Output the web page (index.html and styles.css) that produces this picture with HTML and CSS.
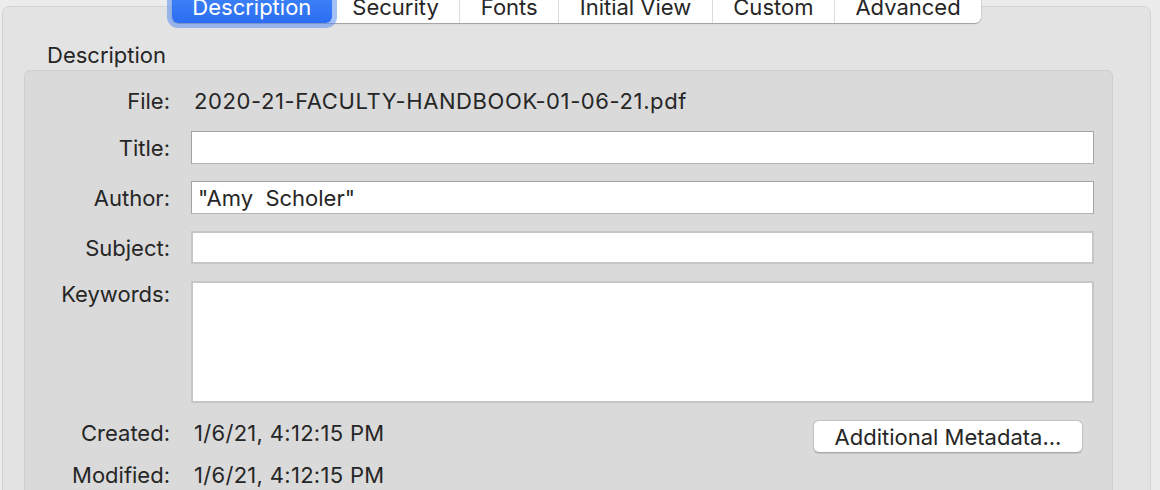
FILE: index.html
```html
<!DOCTYPE html>
<html lang="en">
<head>
    <meta charset="UTF-8">
    <title>Document Properties</title>
    <link rel="stylesheet" href="styles.css">
</head>
<body>
    <div class="panel">
        <div class="tabs">
            <div class="tab selected">Description</div>
            <div class="tab">Security</div>
            <div class="tab">Fonts</div>
            <div class="tab">Initial View</div>
            <div class="tab">Custom</div>
            <div class="tab">Advanced</div>
        </div>
        <div class="group-title">Description</div>
        <div class="group">
            <div class="label">File:</div>
            <div class="value file-name">2020-21-FACULTY-HANDBOOK-01-06-21.pdf</div>

            <div class="label">Title:</div>
            <input class="field dark" type="text" value="">

            <div class="label">Author:</div>
            <input class="field dark" type="text" value="&quot;Amy  Scholer&quot;">

            <div class="label">Subject:</div>
            <input class="field light" type="text" value="">

            <div class="label top">Keywords:</div>
            <textarea class="field light keywords"></textarea>

            <div class="label top">Created:</div>
            <div class="value created">
                <span class="date">1/6/21, 4:12:15 PM</span>
                <button class="meta-button">Additional Metadata...</button>
            </div>

            <div class="label tight">Modified:</div>
            <div class="value date tight">1/6/21, 4:12:15 PM</div>
        </div>
    </div>
</body>
</html>
```

FILE: styles.css
```css
body {
    margin: 0;
    height: 490px;
    overflow: hidden;
    background-color: #ececec;
    font-family: Inter, "Liberation Sans", sans-serif;
    font-size: 22px;
    color: #262626;
}
.panel {
    margin: 6px 9px 0 2px;
    height: 520px;
    background-color: #e3e3e3;
    border: 1px solid #d4d4d4;
    border-radius: 7px;
}
.tabs {
    display: flex;
    width: max-content;
    margin: -15px auto 0 auto;
    height: 31px;
    background-color: white;
    border-radius: 6px;
    box-shadow: 0 1px 1px rgba(0, 0, 0, 0.25), 0 0 0 0.5px rgba(0, 0, 0, 0.12);
}
.tab {
    display: flex;
    align-items: flex-end;
    padding: 0 20.5px 3px 20.5px;
    line-height: 26px;
    border-left: 1px solid #dcdcdc;
}
.tab:nth-child(2),
.tab:first-child {
    border-left: none;
}
.tab.selected {
    color: white;
    background: linear-gradient(#3f86f8, #2c6cf2);
    border-radius: 0 0 6px 6px;
    box-shadow: 0 0 0 5px rgba(88, 142, 240, 0.55);
}
.group-title {
    margin: 19px 0 0 44px;
    line-height: 26px;
}
.group {
    display: grid;
    grid-template-columns: 145px 1fr;
    column-gap: 21px;
    row-gap: 17px;
    margin: 2px 37px 0 21px;
    padding: 17px 18px 40px 0;
    background-color: #dadada;
    border: 1px solid #cfcfcf;
    border-radius: 6px;
}
.label {
    text-align: right;
    align-self: center;
    line-height: 26px;
}
.label.top {
    align-self: start;
}
.value {
    align-self: center;
    line-height: 26px;
    padding-left: 3px;
}
.file-name {
    letter-spacing: 0.6px;
}
.date {
    letter-spacing: 0.3px;
}
.field {
    box-sizing: border-box;
    width: 100%;
    height: 33px;
    margin: 0;
    padding: 0 6px;
    font-family: inherit;
    font-size: 22px;
    color: #262626;
    background-color: white;
    outline: none;
    border-radius: 0;
}
.field.dark {
    border: 1px solid #a3a3a3;
    border-bottom-color: #b3b3b3;
}
.field.light {
    border: 2px solid #c6c6c6;
}
.keywords {
    height: 122px;
    resize: none;
}
.created {
    align-self: start;
    display: flex;
    justify-content: space-between;
    align-items: flex-start;
    padding-right: 11px;
}
.meta-button {
    height: 33px;
    width: 270px;
    padding: 0;
    font-family: inherit;
    font-size: 22px;
    color: #262626;
    background-color: white;
    border: 1px solid #c2c2c2;
    border-bottom-color: #a8a8a8;
    border-radius: 6px;
    box-shadow: 0 1px 1px rgba(0, 0, 0, 0.1);
}
.tight {
    margin-top: -8px;
}
```
